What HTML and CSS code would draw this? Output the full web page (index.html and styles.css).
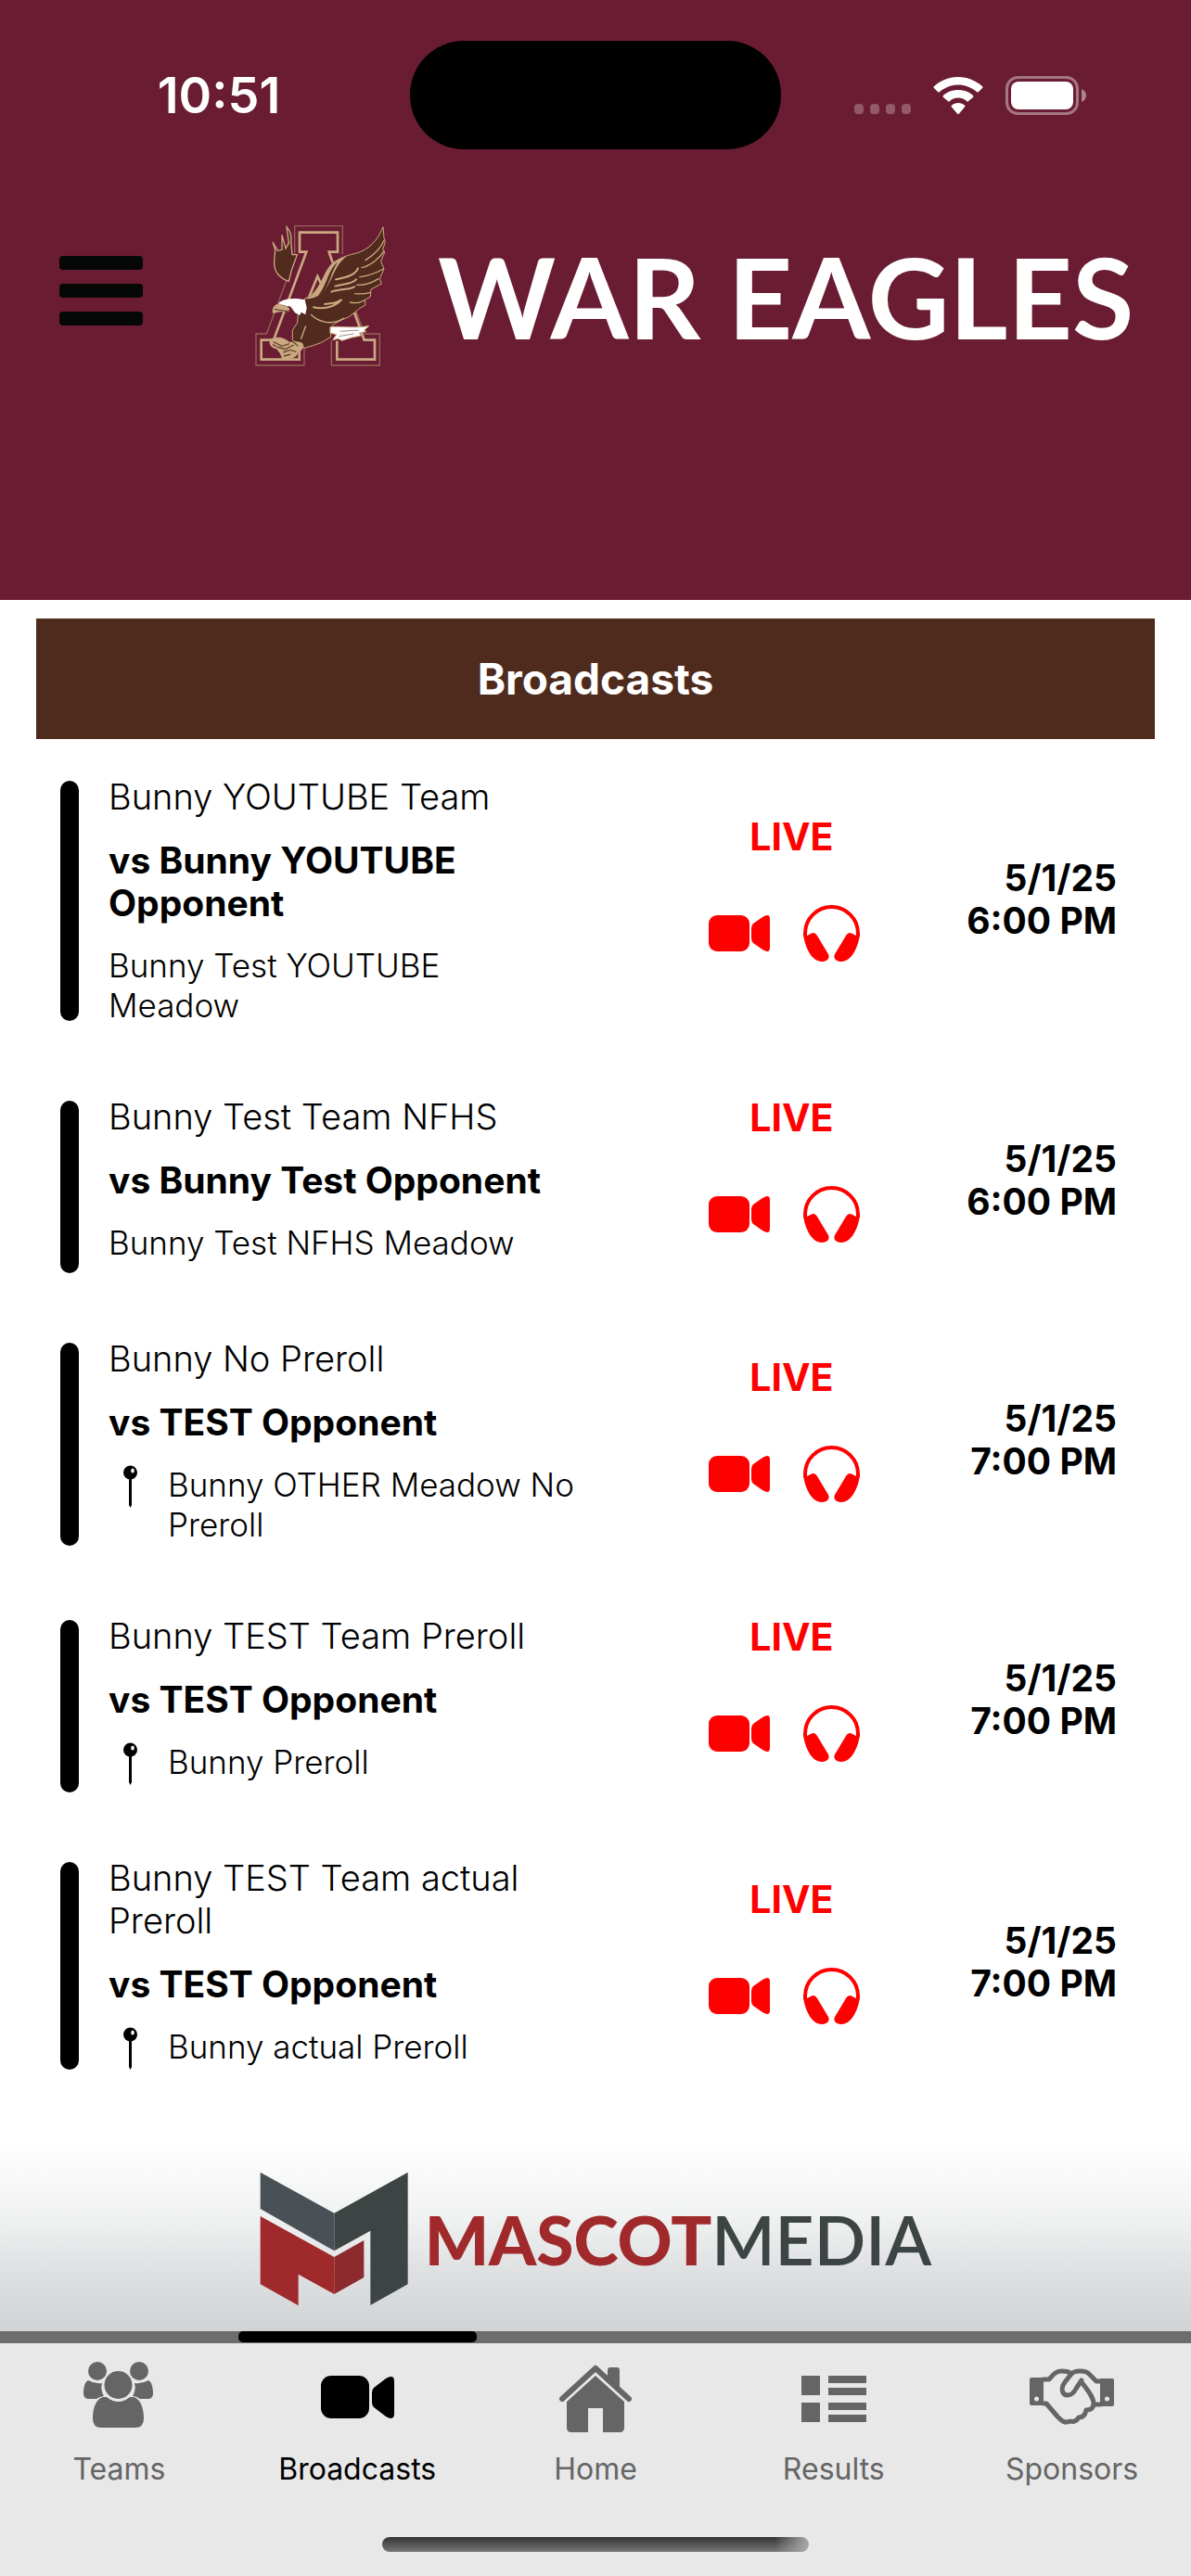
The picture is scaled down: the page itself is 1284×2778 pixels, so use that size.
FILE: index.html
```html
<!DOCTYPE html>
<html lang="en">
<head>
    <meta charset="utf-8">
    <meta name="viewport" content="width=device-width, initial-scale=1">
    <title>War Eagles - Broadcasts</title>
    <link rel="stylesheet" href="styles.css">
</head>
<body>
    <!-- shared icons -->
    <svg class="sprite" aria-hidden="true">
        <symbol id="icon-video" viewBox="0 0 76 61">
            <rect x="0" y="11" width="44" height="39" rx="9"/>
            <path d="M46 25q0-3 2-5l10-7q8-5 8 2v31q0 7-8 2l-10-7q-2-2-2-5z"/>
        </symbol>
        <symbol id="icon-headphones" viewBox="0 0 76 61">
            <path d="M2 34V30.500a28.500 28.500 0 0 1 57 0V34" fill="none" stroke="currentColor" stroke-width="4"/>
            <path d="M0 32C2 46 9 61 20 61c6 0 9-4 7-8L15 33c-2-3-4-4-7-2l-4 2z"/>
            <path d="M61 32C59 46 52 61 41 61c-6 0-9-4-7-8l12-20c2-3 4-4 7-2l4 2z"/>
        </symbol>
        <symbol id="icon-pin" viewBox="0 0 46 46">
            <path d="M22 14h3v29l-1.500 3-1.500-3z"/>
            <circle cx="23.500" cy="8" r="7.500"/>
            <ellipse cx="26" cy="6" rx="1.800" ry="2.500" fill="#fff"/>
        </symbol>
    </svg>

    <header class="header">
        <div class="status-bar">
            <span class="time">10:51</span>
            <span class="island"></span>
            <div class="indicators">
                <svg width="61" height="42" viewBox="0 0 61 42" fill="#fff" fill-opacity=".27">
                    <rect x="0" y="30" width="10" height="11" rx="4"/>
                    <rect x="17" y="30" width="10" height="11" rx="4"/>
                    <rect x="34" y="30" width="10" height="11" rx="4"/>
                    <rect x="51" y="30" width="10" height="11" rx="4"/>
                </svg>
                <svg width="54" height="42" viewBox="0 0 54 42" fill="#fff">
                    <path d="M27 1C17 1 8 5 1 11q-1 1 0 2l4 4q1 1 2 0C13 12 20 9.500 27 9.500S41 12 47 17q1 1 2 0l4-4q1-1 0-2C46 5 37 1 27 1z"/>
                    <path d="M27 15c-6 0-12 2-16 6q-1 1 0 2l5 4q1 1 2 0c2-2 5-3.500 9-3.500s7 1.500 9 3.500q1 1 2 0l5-4q1-1 0-2c-4-4-10-6-16-6z"/>
                    <path d="M27 29c-3 0-5 1-7 2.500q-1 1 0 2l6 7q1 1 2 0l6-7q1-1 0-2C32 30 30 29 27 29z"/>
                </svg>
                <svg width="88" height="42" viewBox="0 0 88 42">
                    <rect x="1.500" y="1.500" width="76" height="39" rx="12" fill="none" stroke="#fff" stroke-opacity=".4" stroke-width="3"/>
                    <rect x="6" y="6" width="67" height="30" rx="8" fill="#fff"/>
                    <path d="M82 14q5 2 5 7t-5 7z" fill="#fff" fill-opacity=".45"/>
                </svg>
            </div>
        </div>
        <div class="brand">
            <button class="menu-button" aria-label="Open menu"><span></span><span></span><span></span></button>
            <svg class="brand-logo" viewBox="66 60 444 480" aria-hidden="true">
                <g fill="none" stroke="#96645a" stroke-width="4">
                    <path d="M203 175V71h155v92M205 172L112 420H78v102h156v-58M400 345l30 75h48v102H322v-80"/>
                </g>
                <g fill="none" stroke="#c9a981" stroke-width="8">
                    <path d="M326 190l-12-35h28V92H219v63h22L135 440H95v63h123v-45M394 345l34 95h34v63H340v-60M249 302l28-68 14 30"/>
                </g>
                <!-- far wing -->
                <path d="M184 250C150 238 135 215 137 185l3-38-8-24 16 28 14-3 0-48 12 44 10-18-7-52c14 15 16 32 14 48l4 42 16 0-18 50z" fill="#512b1d" stroke="#c9a981" stroke-width="4"/>
                <!-- body and near wing -->
                <path d="M236 306C270 296 290 250 312 212C330 182 362 168 400 160C440 150 472 118 489 74L492 110 496 122 488 148 494 156 482 186 492 210 478 242 484 258 450 276 448 300 430 310 432 326 410 340 396 352 376 366 352 376 332 388 318 400 320 430 290 448 262 458 236 466 196 440 196 408 212 384 214 358z" fill="#512b1d" stroke="#c9a981" stroke-width="3"/>
                <path d="M236 307c44-12 52-68 78-104 14-18 32-28 56-33-36 26-40 64-64 100-16 24-38 38-70 37z" fill="#c9a981"/>
                <path d="M278 296c26-24 34-86 64-108-22 32-28 80-50 100z" fill="#512b1d"/>
                <g fill="none" stroke="#c9a981" stroke-linecap="round">
                    <path stroke-width="6" d="M336 244c30-6 62-12 72-36M334 266c26-8 54-6 68-22M322 284c30-10 56-6 74-16M264 334c30 8 70-2 88-22M300 324c30-2 44-6 54-14"/>
                    <path stroke-width="4" d="M432 182c26-16 50-40 60-64M420 206c32-8 60-34 72-54M414 236c34-4 58-16 76-26M404 262c26 2 54-10 70-20M398 290c18 2 36 0 50-4M382 318c18 4 36 0 46-6M256 358c30 30 74 32 106 12M238 396l-14 40"/>
                </g>
                <path d="M150 320c24-16 52-16 86-10l6 26-4 22-14-8-4 10-16-8-14-20-36-8z" fill="#fff"/>
                <path d="M132 354c-4-18 6-32 24-31l30 14-2 12-28 0z" fill="#c9a981"/>
                <path d="M138 340c14 4 28 4 46 8" fill="none" stroke="#512b1d" stroke-width="3"/>
                <path d="M318 398c30-4 84 6 126-4l-16 14 6 4-22 6 6 8-30 6-32 10-12-6-18 4 12-18-20-4z" fill="#fff" stroke="#c9a981" stroke-width="3"/>
                <path d="M350 412l60-4M346 428l48-8" stroke="#9b8f8a" stroke-width="3"/>
                <!-- talons -->
                <path d="M122 440c-4 22 14 26 24 30 6 10 12 12 16 32 6 6 16 2 22-2 18 0 28-8 30-20 12-4 24-18 14-30-12-8-30-2-42-4-18-14-38-22-64-6z" fill="#c9a981"/>
                <path d="M134 446l28 14 24-8M146 462l26 8 28-14M166 480l22-8 20 6M168 492l22-6M196 444l18 16M132 454l12 8" fill="none" stroke="#6b4430" stroke-width="4"/>
            </svg>
            <h1 class="brand-name">WAR EAGLES</h1>
        </div>
    </header>

    <main class="content">
        <h2 class="section-title">Broadcasts</h2>
        <ul class="games">
            <li class="game">
                <span class="game-bar"></span>
                <div class="details">
                    <p class="team">Bunny YOUTUBE Team</p>
                    <p class="opponent">vs Bunny YOUTUBE Opponent</p>
                    <p class="venue">Bunny Test YOUTUBE Meadow</p>
                </div>
                <div class="live">
                    <span>LIVE</span>
                    <div class="live-links">
                        <button aria-label="Watch"><svg><use href="#icon-video"/></svg></button>
                        <button aria-label="Listen"><svg><use href="#icon-headphones"/></svg></button>
                    </div>
                </div>
                <div class="date">5/1/25<br>6:00 PM</div>
            </li>
            <li class="game">
                <span class="game-bar"></span>
                <div class="details">
                    <p class="team">Bunny Test Team NFHS</p>
                    <p class="opponent">vs Bunny Test Opponent</p>
                    <p class="venue">Bunny Test NFHS Meadow</p>
                </div>
                <div class="live">
                    <span>LIVE</span>
                    <div class="live-links">
                        <button aria-label="Watch"><svg><use href="#icon-video"/></svg></button>
                        <button aria-label="Listen"><svg><use href="#icon-headphones"/></svg></button>
                    </div>
                </div>
                <div class="date">5/1/25<br>6:00 PM</div>
            </li>
            <li class="game">
                <span class="game-bar"></span>
                <div class="details">
                    <p class="team">Bunny No Preroll</p>
                    <p class="opponent">vs TEST Opponent</p>
                    <div class="venue pinned"><svg><use href="#icon-pin"/></svg><p>Bunny OTHER Meadow No Preroll</p></div>
                </div>
                <div class="live">
                    <span>LIVE</span>
                    <div class="live-links">
                        <button aria-label="Watch"><svg><use href="#icon-video"/></svg></button>
                        <button aria-label="Listen"><svg><use href="#icon-headphones"/></svg></button>
                    </div>
                </div>
                <div class="date">5/1/25<br>7:00 PM</div>
            </li>
            <li class="game">
                <span class="game-bar"></span>
                <div class="details">
                    <p class="team">Bunny TEST Team Preroll</p>
                    <p class="opponent">vs TEST Opponent</p>
                    <div class="venue pinned"><svg><use href="#icon-pin"/></svg><p>Bunny Preroll</p></div>
                </div>
                <div class="live">
                    <span>LIVE</span>
                    <div class="live-links">
                        <button aria-label="Watch"><svg><use href="#icon-video"/></svg></button>
                        <button aria-label="Listen"><svg><use href="#icon-headphones"/></svg></button>
                    </div>
                </div>
                <div class="date">5/1/25<br>7:00 PM</div>
            </li>
            <li class="game">
                <span class="game-bar"></span>
                <div class="details">
                    <p class="team">Bunny TEST Team actual Preroll</p>
                    <p class="opponent">vs TEST Opponent</p>
                    <div class="venue pinned"><svg><use href="#icon-pin"/></svg><p>Bunny actual Preroll</p></div>
                </div>
                <div class="live">
                    <span>LIVE</span>
                    <div class="live-links">
                        <button aria-label="Watch"><svg><use href="#icon-video"/></svg></button>
                        <button aria-label="Listen"><svg><use href="#icon-headphones"/></svg></button>
                    </div>
                </div>
                <div class="date">5/1/25<br>7:00 PM</div>
            </li>
        </ul>
    </main>

    <footer class="footer">
        <a class="sponsor" href="#">
            <svg width="160" height="145" viewBox="0 0 480 435" aria-hidden="true">
                <path d="M2 2l239 132v122L2 120z" fill="#495056"/>
                <path d="M241 134L479 2v362l-121 68V191l-117 65z" fill="#3c4543"/>
                <path d="M2 144l239 132v120l-116-64v101L2 364z" fill="#a02a2b"/>
                <path d="M241 276l96-54v120l-96 54z" fill="#8d2a2d"/>
            </svg>
            <span class="wordmark"><b>MASCOT</b>MEDIA</span>
        </a>
        <nav class="tabs">
            <a class="tab" href="#">
                <svg width="76" height="72" viewBox="0 0 76 72">
                    <circle cx="15" cy="10" r="10"/>
                    <circle cx="60" cy="10" r="10"/>
                    <ellipse cx="37.500" cy="25" rx="15" ry="15"/>
                    <path d="M5 20c-4 2-5 9-5 14q0 6 6 6h8q4-3 8-3-4-7-2-14-8 1-15-3z"/>
                    <path d="M70 20c4 2 5 9 5 14q0 6-6 6h-8q-4-3-8-3 4-7 2-14 8 1 15-3z"/>
                    <path d="M21 38c-7 2-11 11-11 23q0 10 9 10h37q9 0 9-10c0-12-4-21-11-23h-4q-6 5-12.500 5T25 38z"/>
                </svg>
                <span>Teams</span>
            </a>
            <a class="tab active" href="#">
                <svg width="79" height="72" viewBox="0 0 79 72">
                    <rect x="0" y="15" width="52" height="46" rx="11"/>
                    <path d="M55 33q0-3 2-5l13-10q9-5 9 3v35q0 8-9 3L57 49q-2-2-2-5z"/>
                </svg>
                <span>Broadcasts</span>
            </a>
            <a class="tab" href="#">
                <svg width="78" height="76" viewBox="0 0 78 76">
                    <path d="M52 18V9q0-3 3-3h7q3 0 3 3v20z"/>
                    <path d="M3 40L39 7l36 33" fill="none" stroke="currentColor" stroke-width="6" stroke-linecap="round" stroke-linejoin="round"/>
                    <path d="M39 15L8 43v28q0 5 5 5h18V50h16v26h18q5 0 5-5V43z"/>
                </svg>
                <span>Home</span>
            </a>
            <a class="tab" href="#">
                <svg width="70" height="72" viewBox="0 0 70 72">
                    <path d="M0 15h20v21H0zM29 15h41v8H29zM29 28h41v8H29zM0 44h20v21H0zM29 44h41v8H29zM29 57h41v8H29z"/>
                </svg>
                <span>Results</span>
            </a>
            <a class="tab" href="#">
                <svg width="91" height="72" viewBox="0 0 91 72">
                    <path d="M2 17h13v30H2q-2 0-2-2V19q0-2 2-2zM89 18H76v30h13q2 0 2-2V20q0-2-2-2z"/>
                    <g fill="none" stroke="currentColor" stroke-width="5" stroke-linecap="round" stroke-linejoin="round">
                        <path d="M15 19h6C26 13 29 10 34 10c5 0 8 0 11 3M45 13l-7 9c-5 7-3 14 3 14 4 0 7-3 9-7l6-9"/>
                        <path d="M45 13c4-4 15-4 19 0l8 8h4M56 22c8 10 13 17 13 23 0 5-3 7-8 7-1 6-4 8-8 8-3 5-6 5-9 4-7 3-10-1-14-5L18 45h-3M69 46h7"/>
                    </g>
                    <circle cx="7.500" cy="40" r="2.500" fill="#e8e8e8"/>
                    <circle cx="83.500" cy="40" r="2.500" fill="#e8e8e8"/>
                </svg>
                <span>Sponsors</span>
            </a>
        </nav>
        <div class="home-indicator"></div>
    </footer>
</body>
</html>
```
FILE: styles.css
```css
:root {
    --color-header: #6a1c32;
    --color-section: #4f2b1e;
    --color-live: #f00;
    --color-tab: #656565;
    --color-tabs-background: #e8e8e8;
}

* {
    box-sizing: border-box;
}
body {
    margin: 0;
    min-height: 100vh;
    display: flex;
    flex-direction: column;
    background-color: #fff;
    color: #000;
    font-family: Inter, "Liberation Sans", sans-serif;
}
h1, h2, p, ul {
    margin: 0;
    padding: 0;
}
button {
    padding: 0;
    border: 0;
    background: none;
    color: inherit;
}
svg {
    display: block;
    flex: none;
    fill: currentColor;
}
.sprite {
    position: absolute;
    width: 0;
    height: 0;
}

/* header */
.header {
    padding-bottom: 247px;
    background-color: var(--color-header);
    color: #fff;
}
.status-bar {
    display: grid;
    grid-template-columns: 1fr 400px 1fr;
    align-items: center;
    padding-top: 44px;
}
.time {
    padding-left: 30px;
    text-align: center;
    font-size: 54px;
    font-weight: 600;
}
.island {
    height: 117px;
    border-radius: 58px;
    background-color: #000;
}
.indicators {
    display: flex;
    justify-content: center;
    gap: 24px;
    padding-right: 34px;
}
.brand {
    display: flex;
    align-items: center;
    height: 160px;
    margin-top: 79px;
    padding-left: 64px;
}
.menu-button {
    display: flex;
    flex-direction: column;
    gap: 15px;
    width: 90px;
    margin-right: 118px;
    padding-bottom: 14px;
}
.menu-button span {
    height: 15px;
    border-radius: 4px;
    background-color: #060807;
}
.brand-logo {
    width: 148px;
    height: 160px;
}
.brand-name {
    padding-left: 52px;
    white-space: nowrap;
    font-family: Lato, sans-serif;
    font-size: 121px;
    font-weight: 700;
    line-height: 160px;
}

/* list */
.content {
    flex: 1;
    padding-top: 20px;
}
.section-title {
    margin: 0 39px;
    background-color: var(--color-section);
    color: #fff;
    text-align: center;
    font-size: 46px;
    font-weight: 700;
    line-height: 130px;
}
.games {
    list-style: none;
}
.game {
    display: grid;
    grid-template-columns: 52px 16fr 10fr 5fr;
    padding: 0 80px 0 65px;
}
.game-bar {
    width: 20px;
    height: calc(86% - 38px);
    margin-top: 45px;
    border-radius: 10px;
    background-color: #000;
}
.details {
    display: flex;
    flex-direction: column;
    gap: 23px;
    min-height: 261px;
    padding: 39px 55px 36px 0;
    font-size: 38px;
    line-height: 46px;
}
.team {
    font-weight: 300;
}
.opponent {
    font-size: 39px;
    font-weight: 700;
}
.venue {
    padding-right: 24px;
    font-size: 35px;
    font-weight: 300;
    line-height: 43px;
}
.pinned {
    display: flex;
    gap: 18px;
    padding-right: 0;
}
.pinned svg {
    width: 46px;
    height: 46px;
}
.live {
    display: flex;
    flex-direction: column;
    align-items: center;
    justify-content: center;
    gap: 50px;
    padding-bottom: 24px;
    color: var(--color-live);
    font-size: 41px;
    font-weight: 700;
    line-height: 48px;
}
.live-links {
    display: flex;
    gap: 26px;
}
.live-links svg {
    width: 76px;
    height: 61px;
}
.date {
    align-self: center;
    text-align: right;
    white-space: nowrap;
    font-size: 39px;
    font-weight: 700;
    line-height: 46px;
}

/* sponsor and tabs */
.sponsor {
    display: flex;
    align-items: center;
    justify-content: center;
    gap: 18px;
    height: 204px;
    padding-top: 5px;
    background: linear-gradient(#fff, #f0f1f1 40%, #dedfe1 70%, #d2d3d5);
    color: #3c4543;
    text-decoration: none;
}
.wordmark {
    font-family: Lato, sans-serif;
    font-size: 73px;
    font-weight: 600;
}
.wordmark b {
    color: #a02a2b;
    font-weight: 900;
}
.tabs {
    display: grid;
    grid-template-columns: repeat(5, 1fr);
    border-top: 13px solid #6d6d6d;
    background-color: var(--color-tabs-background);
}
.tab {
    position: relative;
    display: flex;
    flex-direction: column;
    align-items: center;
    justify-content: space-between;
    height: 154px;
    padding-top: 20px;
    color: var(--color-tab);
    text-decoration: none;
    font-size: 32px;
    line-height: 36px;
}
.active {
    color: #000;
}
.active::before {
    content: "";
    position: absolute;
    top: -13px;
    left: 0;
    width: 100%;
    height: 12px;
    border-radius: 5px;
    background-color: #000;
}
.home-indicator {
    padding: 55px 412px 26px;
    background-color: var(--color-tabs-background);
}
.home-indicator::before {
    content: "";
    display: block;
    height: 16px;
    border-radius: 8px;
    background: linear-gradient(90deg, transparent 92%, #aaa), linear-gradient(#333, #777);
}
```
